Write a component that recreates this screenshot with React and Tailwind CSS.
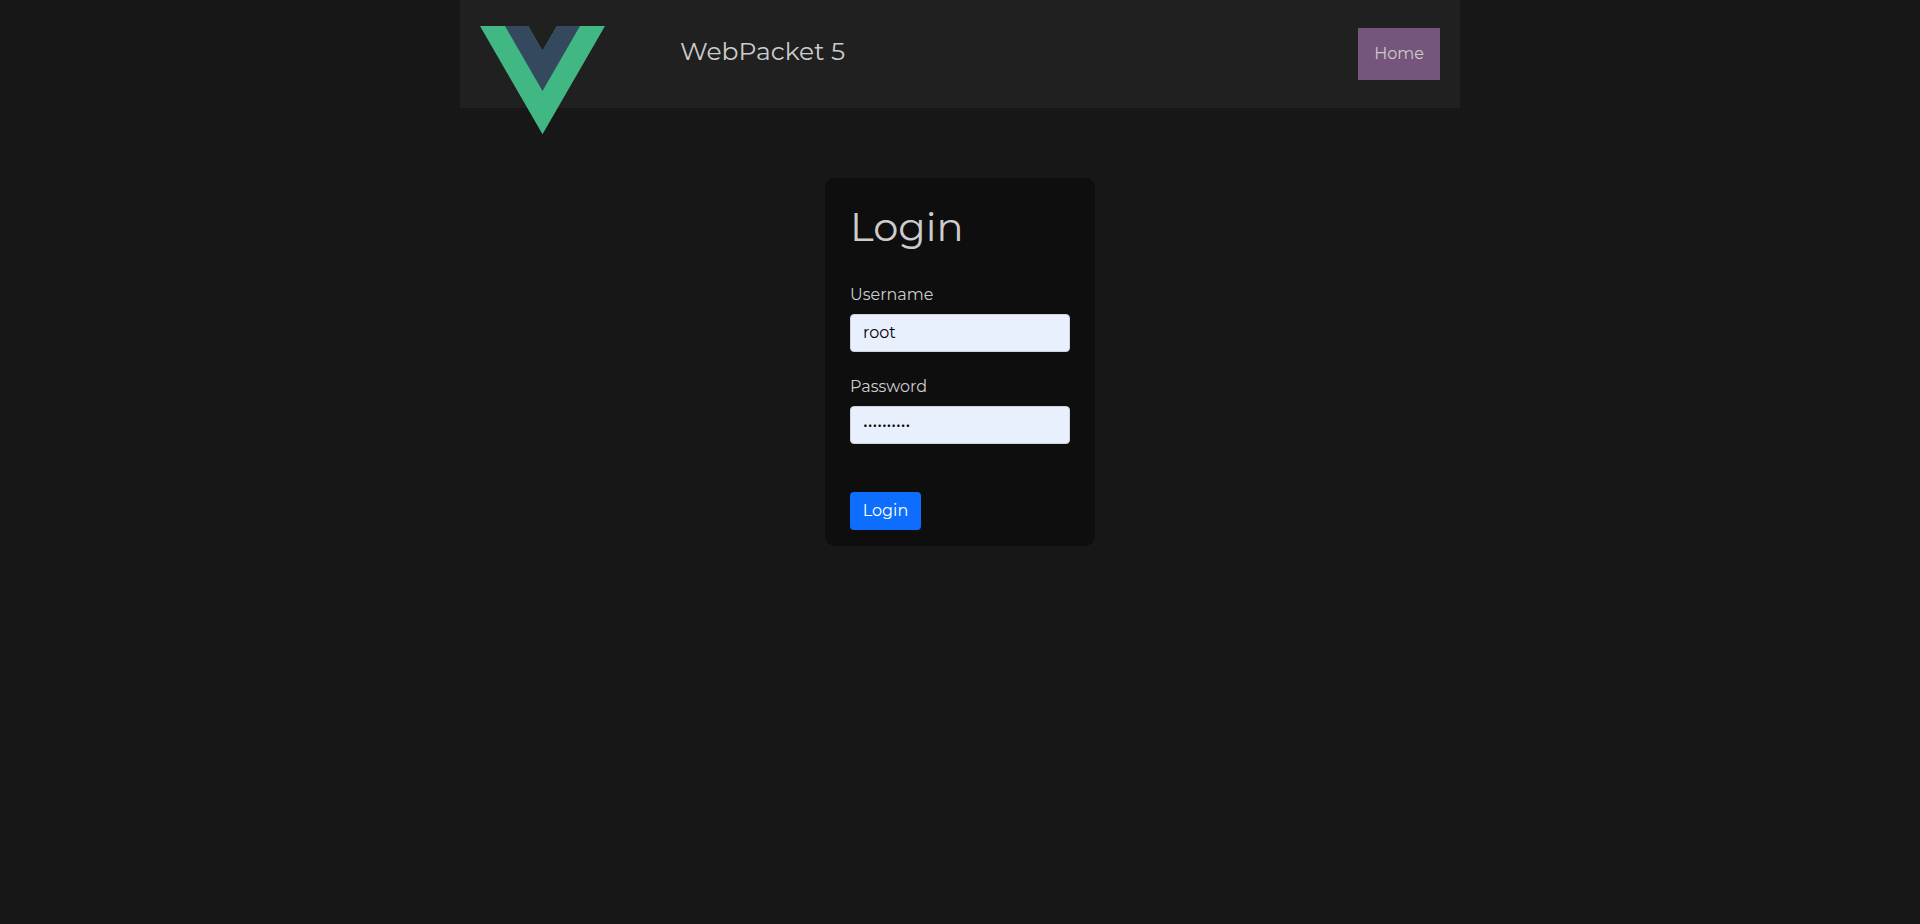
function VueLogo() {
  return (
    <svg className="block h-[108.25px] w-[125px] shrink-0" viewBox="0 0 261.76 226.69" aria-hidden="true">
      <path d="M161.096 0l-30.225 52.351L100.647 0H0l130.871 226.688L261.749 0z" fill="#41b883" />
      <path d="M161.096 0l-30.225 52.351L100.647 0H52.346l78.526 136.01L209.398 0z" fill="#34495e" />
    </svg>
  );
}

function Field({ label, type, value, className }) {
  return (
    <label className={className}>
      <span className="block h-6 leading-6">{label}</span>
      <input
        type={type}
        defaultValue={value}
        className="mt-[7px] block h-[38px] w-full rounded-[4px] border border-[#ced4da] bg-[#e8f0fe] px-3 pt-[5px] pb-[7px] leading-6 text-black outline-none"
      />
    </label>
  );
}

export default function App() {
  return (
    <div className="min-h-screen bg-[#171717] font-['Montserrat','Inter',sans-serif] text-base text-[#cccccc]">
      <header className="mx-auto flex h-[108px] w-[1000px] items-start bg-[#202020] px-5">
        <div className="h-[108px] w-[200px] pt-[26px]">
          <VueLogo />
        </div>
        <h1 className="mt-[33px] text-[25px] leading-9">WebPacket 5</h1>
        <a className="mt-7 ml-auto flex h-[52px] w-[82px] items-center justify-center bg-[#76557d] pb-px">
          Home
        </a>
      </header>
      <main className="mx-auto mt-[70px] h-[368px] w-[270px] rounded-[10px] bg-[#0e0e0e] px-[25px] pt-[25px]">
        <h2 className="text-[40px] leading-[48px]">Login</h2>
        <form className="mt-8 flex flex-col items-start">
          <Field label="Username" type="text" value="root" className="w-full" />
          <Field label="Password" type="password" value="abcdefghij" className="mt-[23px] w-full" />
          <button type="button" className="mt-12 h-[38px] w-[71px] rounded-[4px] bg-[#0d6efd] leading-6 text-white">
            Login
          </button>
        </form>
      </main>
    </div>
  );
}
